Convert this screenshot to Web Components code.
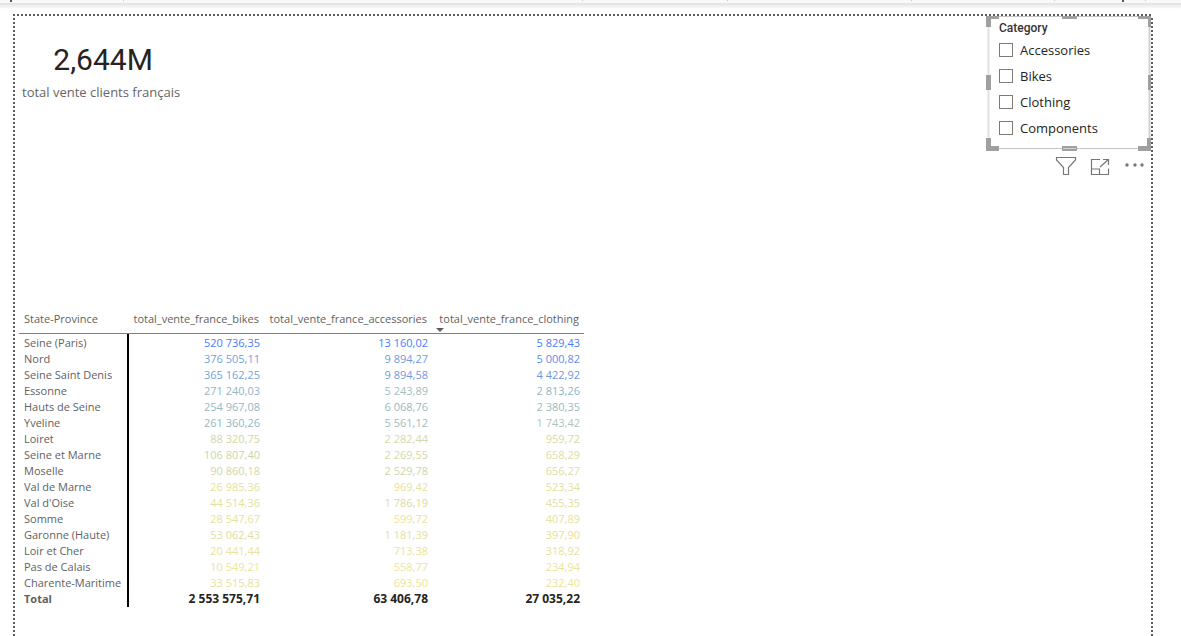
<!DOCTYPE html>
<html lang="fr">
<head>
<meta charset="utf-8">
<title>Ventes France</title>
<style>
  html, body { height: 100%; }
  body { margin: 0; background: #fff; overflow: hidden; font-family: "Open Sans", "Noto Sans", sans-serif; }
</style>
</head>
<body>
<report-app></report-app>

<template id="tpl-app">
  <style>
    :host { display: flex; flex-direction: column; height: 100%; }
    report-canvas { flex: 1; }
    .top { display: flex; justify-content: space-between; align-items: flex-start; }
    .side { display: flex; flex-direction: column; gap: 6px; }
  </style>
  <ribbon-edge></ribbon-edge>
  <report-canvas>
    <div class="top">
      <kpi-card><span slot="value">2,644M</span>total vente clients français</kpi-card>
      <div class="side">
        <slicer-box heading="Category" items="Accessories,Bikes,Clothing,Components"></slicer-box>
        <visual-actions></visual-actions>
      </div>
    </div>
    <sales-matrix></sales-matrix>
  </report-canvas>
</template>

<template id="tpl-ribbon">
  <style>
    :host { display: block; height: 14px; background: linear-gradient(#e0e0e0, #fff 6px) 0 3px no-repeat; }
    .bar { display: grid; grid-template-columns: 124fr 459fr 145fr 184fr 143fr 91fr 35fr; height: 3px; background: #f9f9f9; }
    i { height: 1px; border-right: 1px solid #c4c4c4; }
    i:last-child { border: 0; }
    i.p::before, i.y::before { content: ""; display: block; width: 2px; height: 2px; background: #555; }
    i.p::before { margin-left: 10px; }
    i.y::before { margin-left: 67px; }
  </style>
  <div class="bar"><i class="p"></i><i></i><i></i><i></i><i></i><i class="y"></i><i></i></div>
</template>

<template id="tpl-canvas">
  <style>
    :host {
      --dot: #5c5c5c;
      display: flex; flex-direction: column; box-sizing: border-box;
      margin: 0 28px 0 13px; padding: 2px 2px 0;
      background:
        repeating-linear-gradient(90deg, var(--dot) 0 2px, #fff 2px 4px) 0 0 / 100% 2px no-repeat,
        repeating-linear-gradient(var(--dot) 0 2px, #fff 2px 4px) 0 0 / 2px 100% no-repeat,
        repeating-linear-gradient(var(--dot) 0 2px, #fff 2px 4px) 100% 0 / 2px 100% no-repeat;
    }
  </style>
  <slot></slot>
</template>

<template id="tpl-kpi">
  <style>
    :host { display: flex; flex-direction: column; align-items: center; padding: 24px 7px 0; color: #666; font-size: 13px; line-height: 24px; }
    .value { padding-left: 4px; font: 30px/40px Roboto, sans-serif; color: #252423; }
  </style>
  <div class="value"><slot name="value"></slot></div>
  <div><slot></slot></div>
</template>

<template id="tpl-slicer">
  <style>
    :host { display: block; position: relative; box-sizing: border-box; width: 165px; height: 135px; padding: 4px 13px; }
    .frame { position: absolute; inset: 0; width: 100%; height: 100%; pointer-events: none; }
    h2 { margin: 0 0 1px; font: 500 12px/16px Roboto, sans-serif; color: #333; }
    label { display: flex; align-items: center; gap: 7px; height: 26px; font-size: 13px; color: #252423; }
    input { appearance: none; box-sizing: border-box; width: 14px; height: 14px; margin: 0; border: 1px solid #7d7b7a; background: #fff; }
    input:checked { background: #555; }
    [role=group] { position: relative; }
  </style>
  <svg class="frame" viewBox="0 0 165 135" fill="none" aria-hidden="true">
    <path d="M2.500 1.500V133.500" stroke="#e0e0e0" stroke-width="2"/>
    <path d="M163.500 1.500V133" stroke="#d0d0d0" stroke-width="2"/>
    <path d="M2 .5H164M2 132.500H164" stroke="#c4c4c4"/>
    <g fill="#a0a0a0">
      <path d="M0 0H13V3H5V11H0zM152 0H165V11H162V3H152zM0 122H5V130H13V135H0zM161 122H165V135H152V130H161z"/>
      <path d="M76 0H91V3H76zM76 130H91V135H76zM0 59H5V74H0zM162 59H165V74H162z"/>
    </g>
    <path d="M77 132.500H90" stroke="#d0d0d0"/>
  </svg>
  <div role="group" aria-labelledby="h"><h2 id="h"></h2></div>
</template>

<template id="tpl-actions">
  <style>
    :host { display: flex; justify-content: flex-end; gap: 11px; padding-right: 5px; }
    button { display: block; width: 23px; height: 22px; padding: 0; border: 0; background: none; color: #777; }
    svg { display: block; width: 23px; height: 22px; fill: none; stroke: currentColor; stroke-width: 1; }
  </style>
  <button aria-label="Filtres"><svg viewBox="0 0 23 22"><path d="M1.500 .5H20.500V3L13.500 10.500V17.500H8.500V10.500L1.500 3z" stroke-width="1.200"/></svg></button>
  <button aria-label="Mode focus"><svg viewBox="0 0 23 22"><path d="M11 2.500H2.500V17.500H19.500V11.500M2.500 12H10.500V17.500M11 10L19 2.800M14 2.500H19.500V8" stroke-width="1.200"/></svg></button>
  <button aria-label="Plus d'options"><svg viewBox="0 0 23 22"><g fill="currentColor" stroke="none"><circle cx="4" cy="8" r="1.700"/><circle cx="12" cy="8" r="1.700"/><circle cx="19" cy="8" r="1.700"/></g></svg></button>
</template>

<template id="tpl-matrix">
  <style>
    :host { display: block; margin: 126px 0 0 4px; }
    table { table-layout: fixed; width: 565px; border-collapse: separate; border-spacing: 0; font-size: 11px; line-height: 16px; color: #5f5f5f; }
    th, td { padding: 0 4px 0 0; text-align: right; font-weight: 400; white-space: nowrap; }
    thead th { position: relative; height: 29px; padding-right: 5px; border-bottom: 1px solid #808080; vertical-align: top; line-height: 28px; box-sizing: border-box; }
    tr > :first-child { text-align: left; padding: 0 0 0 5px; }
    tbody > tr > th, tfoot > tr > th { border-right: 2px solid #000; }
    tbody tr:first-child > * { padding-top: 1px; }
    tfoot > tr > * { font-weight: 700; }
    tfoot td { color: #252423; font-size: 12px; }
    .sort::after { content: ""; position: absolute; left: 4px; bottom: 1px; border: 4px solid transparent; border-top-color: #605e5c; border-bottom: 0; }
  </style>
  <table>
    <colgroup><col style="width:110px"><col style="width:135px"><col style="width:168px"><col style="width:152px"></colgroup>
    <thead><tr><th scope="col">State-Province</th><th scope="col">total_vente_france_bikes</th><th scope="col">total_vente_france_accessories</th><th scope="col" class="sort" aria-sort="descending">total_vente_france_clothing</th></tr></thead>
    <tbody></tbody>
    <tfoot><tr><th scope="row">Total</th><td>2 553 575,71</td><td>63 406,78</td><td>27 035,22</td></tr></tfoot>
  </table>
</template>

<script>
  class Base extends HTMLElement {
    constructor() {
      super();
      this.attachShadow({ mode: "open" }).append(
        document.getElementById(this.constructor.tpl).content.cloneNode(true));
    }
  }
  class RibbonEdge extends Base { static tpl = "tpl-ribbon"; }
  class ReportCanvas extends Base { static tpl = "tpl-canvas"; }
  class KpiCard extends Base { static tpl = "tpl-kpi"; }
  class VisualActions extends Base { static tpl = "tpl-actions"; }

  class SlicerBox extends Base {
    static tpl = "tpl-slicer";
    connectedCallback() {
      const group = this.shadowRoot.querySelector("[role=group]");
      group.querySelector("h2").textContent = this.getAttribute("heading");
      for (const item of this.getAttribute("items").split(",")) {
        const label = document.createElement("label");
        const box = document.createElement("input");
        box.type = "checkbox";
        label.append(box, item);
        group.append(label);
      }
    }
  }

  // State, then value and colour for bikes, accessories and clothing.
  const ROWS = [
    ["Seine (Paris)", "520 736,35", "#4a7dff", "13 160,02", "#4a7dff", "5 829,43", "#4a7dff"],
    ["Nord", "376 505,11", "#749fdc", "9 894,27", "#7099e0", "5 000,82", "#5f8cec"],
    ["Seine Saint Denis", "365 162,25", "#76a1da", "9 894,58", "#7099e0", "4 422,92", "#6c98e2"],
    ["Essonne", "271 240,03", "#91b6c6", "5 243,89", "#a2c0be", "2 813,26", "#90b4c6"],
    ["Hauts de Seine", "254 967,08", "#94b8c4", "6 068,76", "#98b9c4", "2 380,35", "#99bac2"],
    ["Yveline", "261 360,26", "#93b7c5", "5 561,12", "#9ebdc0", "1 743,42", "#adc6b8"],
    ["Loiret", "88 320,75", "#d0d8a8", "2 282,44", "#d2d8a8", "959,72", "#d8d9a2"],
    ["Seine et Marne", "106 807,40", "#ccd5aa", "2 269,55", "#d2d8a8", "658,29", "#dfdd9f"],
    ["Moselle", "90 860,18", "#d0d8a8", "2 529,78", "#cdd6aa", "656,27", "#dfdd9f"],
    ["Val de Marne", "26 985,36", "#e8e29c", "969,42", "#e8e29c", "523,34", "#e4e09d"],
    ["Val d'Oise", "44 514,36", "#e2df9f", "1 786,19", "#dadba4", "455,35", "#e5e09d"],
    ["Somme", "28 547,67", "#e7e29c", "599,72", "#ece49a", "407,89", "#e6e19c"],
    ["Garonne (Haute)", "53 062,43", "#dfdda0", "1 181,39", "#e4e09e", "397,90", "#e6e19c"],
    ["Loir et Cher", "20 441,44", "#eae39b", "713,38", "#ebe49a", "318,92", "#e8e29b"],
    ["Pas de Calais", "10 549,21", "#eee699", "558,77", "#ede599", "234,94", "#ebe49a"],
    ["Charente-Maritime", "33 515,83", "#e6e19d", "693,50", "#ebe49a", "232,40", "#ebe49a"]
  ];
  class SalesMatrix extends Base {
    static tpl = "tpl-matrix";
    connectedCallback() {
      const body = this.shadowRoot.querySelector("tbody");
      for (const [state, ...cells] of ROWS) {
        const tr = body.insertRow();
        const th = document.createElement("th");
        th.scope = "row";
        th.textContent = state;
        tr.append(th);
        for (let i = 0; i < cells.length; i += 2) {
          const td = tr.insertCell();
          td.textContent = cells[i];
          td.style.color = cells[i + 1];
        }
      }
    }
  }
  class ReportApp extends Base { static tpl = "tpl-app"; }

  customElements.define("ribbon-edge", RibbonEdge);
  customElements.define("report-canvas", ReportCanvas);
  customElements.define("kpi-card", KpiCard);
  customElements.define("visual-actions", VisualActions);
  customElements.define("slicer-box", SlicerBox);
  customElements.define("sales-matrix", SalesMatrix);
  customElements.define("report-app", ReportApp);
</script>
</body>
</html>
